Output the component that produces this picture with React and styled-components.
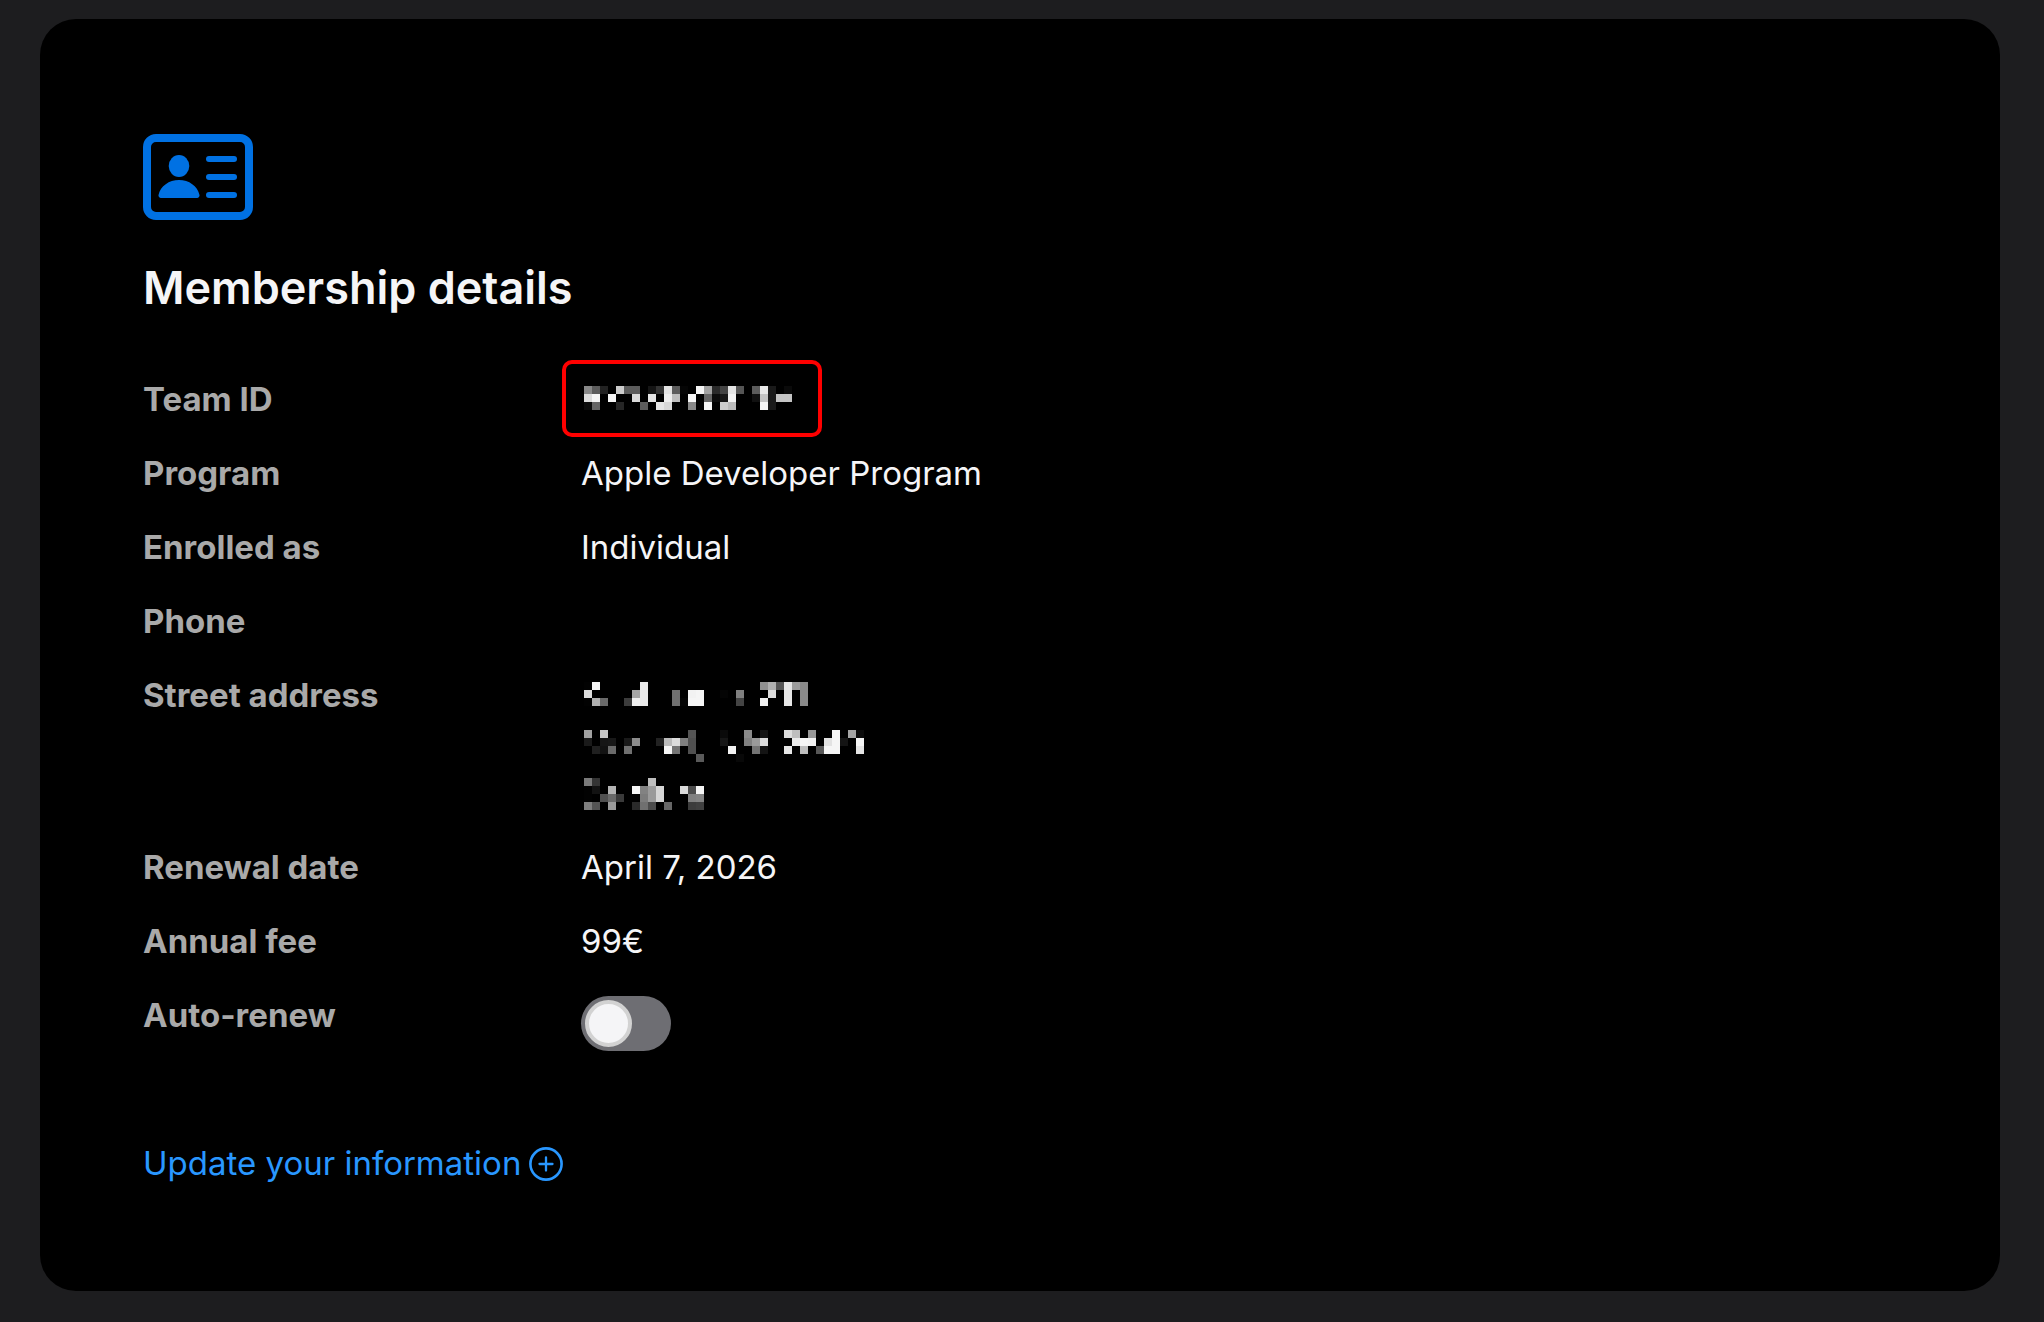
import React from "react";
import styled, { createGlobalStyle } from "styled-components";

const GlobalStyle = createGlobalStyle`
  *, *::before, *::after { box-sizing: border-box; }
  body {
    margin: 0;
    background: #1d1d1f;
    color: #f5f5f7;
    font-family: Inter, "Liberation Sans", sans-serif;
    font-size: 33px;
    line-height: 49px;
    -webkit-font-smoothing: antialiased;
  }
`;

const Page = styled.main`
  padding: 19px 44px 31px 40px;
`;

const Card = styled.section`
  padding: 115px 103px 103px;
  border-radius: 36px;
  background: #000;
`;

const BadgeIcon = styled.svg`
  display: block;
  width: 110px;
  height: 86px;
`;

const Title = styled.h1`
  margin: 40px 0 59px;
  font-size: 45px;
  font-weight: 600;
  line-height: 56px;
`;

const Details = styled.dl`
  display: grid;
  gap: 25px;
  margin: 0;
`;

const Row = styled.div`
  display: grid;
  grid-template-columns: 438px 1fr;
  align-items: start;
`;

const Term = styled.dt`
  color: #a9a9a9;
  font-weight: 700;
`;

const Value = styled.dd`
  display: flex;
  min-height: ${(p) => (p.$lines || 1) * 49}px;
  margin: 0;
`;

const Redacted = styled.span`
  position: relative;
  padding: 11px 3px 0;
  height: 49px;
`;

const Highlight = styled.span`
  position: absolute;
  inset: -15px -27px -13px -19px;
  border: 4px solid #f00;
  border-radius: 10px;
`;

const MosaicSvg = styled.svg`
  display: block;
`;

const Switch = styled.input`
  appearance: none;
  display: flex;
  align-items: center;
  width: 90px;
  height: 55px;
  margin: 5px 0 0;
  padding: 0 4px;
  border-radius: 28px;
  background: #6e6e73;
  cursor: pointer;

  &::before {
    content: "";
    width: 47px;
    height: 47px;
    border: 4px solid #d2d2d2;
    border-radius: 50%;
    background: #f5f5f7;
  }

  &:checked {
    justify-content: flex-end;
    background: #30d158;
  }
`;

const UpdateLink = styled.a`
  display: inline-flex;
  align-items: center;
  gap: 8px;
  margin-top: 88px;
  color: #2997ff;
  text-decoration: none;
`;

const TEAM_ID = [
  "88 5c 22 .. cc 5c 5c .. 15 33 e4 5c 05 .. f5 a2 2a 44 e4 55 .. 5c e8 1a .. 0a",
  "dc f5 .. f5 .. .. da .. e4 .. ef be .. f5 .. 66 0c 18 f2 .. .. 11 c4 1a c4 c4",
  "0c 66 .. .. 26 .. .. 5c .. e6 d8 .. .. 88 .. f5 .. ce bc .. .. .. f5 1a .. ..",
];

const ADDRESS = [
  "02 f5 .. .. .. .. .. e9 .. .. .. .. .. .. .. .. .. .. .. .. .. .. 90 b0 55 e6 9c 8a",
  "dc .. .. .. .. .. a6 e9 .. .. .. 70 .. f2 f5 .. .. 04 .. 80 .. .. .. dc .. e6 .. 8a",
  "02 b0 6a .. .. 3c f0 e9 .. .. .. 70 04 f5 f5 .. .. .. .. 44 .. .. f0 .. .. e6 .. 8a",
  "..",
  "..",
  "..",
  "a2 .. c8 .. .. .. .. .. .. .. .. .. .. 55 .. .. .. 0a .. .. 8a .. 14 .. .. dc be .. 98 .. .. f5 .. a4 0c",
  "1a .. 16 18 .. 1a 8c .. .. 22 bc dc 80 50 .. .. .. 16 .. .. 80 9a dc .. .. .. ea f5 f2 .. e2 f5 14 .. f5",
  ".. 20 12 6a .. 70 .. .. .. .. f5 74 .. 50 .. .. .. .. f2 .. .. 74 14 .. .. e6 .. be .. 58 f5 f5 .. .. e4",
  ".. .. .. .. .. .. .. .. .. .. .. .. .. .. 5a .. .. .. .. 08",
  "..",
  "..",
  "7a 34 .. .. .. .. .. .. be",
  "02 12 .. b4 .. .. f5 82 9a d6 .. .. da 4c f5",
  "02 .. 50 6a 3a .. .. 7c 9a d6 .. .. .. 80 84",
  "7e 54 .. 9a .. .. 2a 70 4c .. 66 .. .. 3c 40",
];

const CELL = 8;

function Mosaic({ rows }) {
  const grid = rows.map((row) => row.split(" "));
  const width = Math.max(...grid.map((row) => row.length)) * CELL;
  return (
    <MosaicSvg
      width={width}
      height={grid.length * CELL}
      shapeRendering="crispEdges"
      aria-hidden="true"
    >
      {grid.flatMap((row, y) =>
        row.map((level, x) =>
          level === ".." ? null : (
            <rect
              key={`${x}-${y}`}
              x={x * CELL}
              y={y * CELL}
              width={CELL}
              height={CELL}
              fill={`#${level}${level}${level}`}
            />
          )
        )
      )}
    </MosaicSvg>
  );
}

function MembershipIcon() {
  return (
    <BadgeIcon viewBox="0 0 110 86" fill="#0071e3" aria-hidden="true">
      <rect x="4" y="4" width="102" height="78" rx="9" fill="none" stroke="#0071e3" strokeWidth="8" />
      <ellipse cx="36" cy="32" rx="10.3" ry="11" />
      <path d="M18 64a2.5 2.5 0 0 1-2.5-3C17.500 52 26 46 36 46S54.500 52 56.500 61a2.500 2.500 0 0 1-2.500 3Z" />
      <rect x="63" y="22" width="31" height="6" rx="3" />
      <rect x="63" y="40" width="31" height="6" rx="3" />
      <rect x="63" y="58" width="31" height="6" rx="3" />
    </BadgeIcon>
  );
}

function PlusCircle() {
  return (
    <svg width="34" height="34" viewBox="0 0 34 34" fill="none" stroke="#2997ff" strokeWidth="2.6" strokeLinecap="round" aria-hidden="true">
      <circle cx="17" cy="17" r="15.6" />
      <path d="M17 10.5v13M10.5 17h13" strokeWidth="2.3" />
    </svg>
  );
}

export default function App() {
  return (
    <>
      <GlobalStyle />
      <Page>
        <Card>
          <MembershipIcon />
          <Title>Membership details</Title>
          <Details>
            <Row>
              <Term>Team ID</Term>
              <Value>
                <Redacted>
                  <Mosaic rows={TEAM_ID} />
                  <Highlight />
                </Redacted>
              </Value>
            </Row>
            <Row>
              <Term>Program</Term>
              <Value>Apple Developer Program</Value>
            </Row>
            <Row>
              <Term>Enrolled as</Term>
              <Value>Individual</Value>
            </Row>
            <Row>
              <Term>Phone</Term>
              <Value />
            </Row>
            <Row>
              <Term>Street address</Term>
              <Value $lines={3}>
                <Redacted>
                  <Mosaic rows={ADDRESS} />
                </Redacted>
              </Value>
            </Row>
            <Row>
              <Term>Renewal date</Term>
              <Value>April 7, 2026</Value>
            </Row>
            <Row>
              <Term>Annual fee</Term>
              <Value>99€</Value>
            </Row>
            <Row>
              <Term>
                <label htmlFor="auto-renew">Auto-renew</label>
              </Term>
              <Value>
                <Switch id="auto-renew" type="checkbox" role="switch" />
              </Value>
            </Row>
          </Details>
          <UpdateLink href="#update">
            Update your information
            <PlusCircle />
          </UpdateLink>
        </Card>
      </Page>
    </>
  );
}
